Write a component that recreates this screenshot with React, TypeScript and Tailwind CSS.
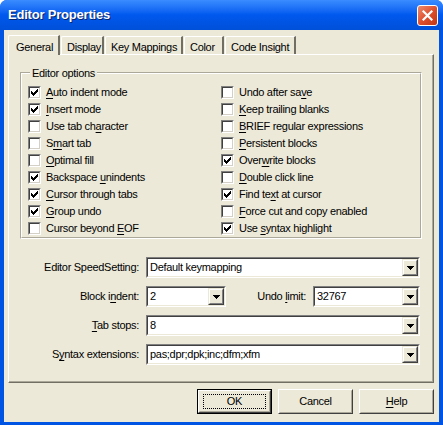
import React from "react";

const FONT = { fontFamily: '"Liberation Sans", Arial, sans-serif' };

type Opt = { text: string; u: number; checked: boolean };

const leftOpts: Opt[] = [
  { text: "Auto indent mode", u: 0, checked: true },
  { text: "Insert mode", u: 0, checked: true },
  { text: "Use tab character", u: 10, checked: false },
  { text: "Smart tab", u: 1, checked: false },
  { text: "Optimal fill", u: 0, checked: false },
  { text: "Backspace unindents", u: 10, checked: true },
  { text: "Cursor through tabs", u: 0, checked: true },
  { text: "Group undo", u: 0, checked: true },
  { text: "Cursor beyond EOF", u: 14, checked: false },
];

const rightOpts: Opt[] = [
  { text: "Undo after save", u: 13, checked: false },
  { text: "Keep trailing blanks", u: 0, checked: false },
  { text: "BRIEF regular expressions", u: 0, checked: false },
  { text: "Persistent blocks", u: 0, checked: false },
  { text: "Overwrite blocks", u: 4, checked: true },
  { text: "Double click line", u: 0, checked: false },
  { text: "Find text at cursor", u: 7, checked: true },
  { text: "Force cut and copy enabled", u: 0, checked: false },
  { text: "Use syntax highlight", u: 4, checked: true },
];

const Mnemonic = ({ text, u }: { text: string; u: number }) => (
  <span className="whitespace-pre">
    {text.slice(0, u)}
    <span className="underline underline-offset-2">{text[u]}</span>
    {text.slice(u + 1)}
  </span>
);

const CheckBox = ({ opt }: { opt: Opt }) => (
  <div className="flex items-center h-[17px]">
    <div className="w-[13px] h-[13px] border border-t-[#808080] border-l-[#808080] border-r-white border-b-white">
      <div className="w-full h-full bg-white border border-t-[#404040] border-l-[#404040] border-r-[#D4D0C8] border-b-[#D4D0C8] flex items-center justify-center">
        {opt.checked && (
          <svg width="7" height="7" viewBox="0 0 7 7" shapeRendering="crispEdges">
            <path d="M0 2h1v3H0zM1 3h1v3H1zM2 4h1v3H2zM3 3h1v3H3zM4 2h1v3H4zM5 1h1v3H5zM6 0h1v3H6z" fill="#000" />
          </svg>
        )}
      </div>
    </div>
    <span className="ml-[5px] text-[11px] tracking-[-0.3px] text-black leading-none">
      <Mnemonic text={opt.text} u={opt.u} />
    </span>
  </div>
);

const Arrow = () => (
  <svg width="7" height="4" viewBox="0 0 7 4" shapeRendering="crispEdges">
    <path d="M0 0h7v1H0zM1 1h5v1H1zM2 2h3v1H2zM3 3h1v1H3z" fill="#000" />
  </svg>
);

const Combo = ({ value, width }: { value: string; width: string }) => (
  <div className={`${width} h-[21px] border border-t-[#808080] border-l-[#808080] border-r-white border-b-white`}>
    <div className="h-full bg-white border border-t-[#404040] border-l-[#404040] border-r-[#ECE9D8] border-b-[#ECE9D8] flex items-stretch">
      <span className="flex-1 text-[11px] tracking-[-0.3px] leading-none pl-[2px] pt-[3px] text-black">{value}</span>
      <div className="w-[16px] border border-t-[#ECE9D8] border-l-[#ECE9D8] border-r-[#404040] border-b-[#404040]">
        <div className="h-full bg-[#ECE9D8] border border-t-white border-l-white border-r-[#808080] border-b-[#808080] flex items-center justify-center">
          <Arrow />
        </div>
      </div>
    </div>
  </div>
);

const Label = ({ text, u, width }: { text: string; u: number; width: string }) => (
  <span className={`${width} text-right text-[11px] tracking-[-0.3px] text-black pr-[7px]`}>
    {u < 0 ? text : <Mnemonic text={text} u={u} />}
  </span>
);

const Button = ({ children, def }: { children: React.ReactNode; def?: boolean }) => (
  <div className={`w-[75px] h-[25px] ${def ? "border border-black" : ""}`}>
    <div className="w-full h-full border border-t-white border-l-white border-r-[#404040] border-b-[#404040]">
      <div className="w-full h-full border border-t-[#ECE9D8] border-l-[#ECE9D8] border-r-[#ACA899] border-b-[#ACA899] flex items-center justify-center">
        <div className={`px-[3px] ${def ? "w-[63px] h-[15px] border border-dotted border-black" : ""} flex items-center justify-center text-[11px] tracking-[-0.3px] text-black`}>
          {children}
        </div>
      </div>
    </div>
  </div>
);

const tabs = [
  { t: "General", w: "w-[52px]" },
  { t: "Display", w: "w-[43px]" },
  { t: "Key Mappings", w: "w-[78px]" },
  { t: "Color", w: "w-[40px]" },
  { t: "Code Insight", w: "w-[71px]" },
];

export default function App() {
  return (
    <div className="w-[443px] h-[425px] bg-[#0054E3] flex flex-col rounded-t-[7px] overflow-hidden" style={FONT}>
      {/* title bar */}
      <div className="h-[30px] flex items-center justify-between pl-[8px] pr-[5px] bg-gradient-to-b from-[#3A8CFF] via-[#0058EE] to-[#0050D8]">
        <span className="text-white font-bold text-[13px] tracking-[-0.2px] [text-shadow:1px_1px_0_#0A246A]">
          Editor Properties
        </span>
        <div className="w-[21px] h-[21px] rounded-[3px] border border-white bg-gradient-to-br from-[#E98A6C] via-[#E0502D] to-[#C23512] flex items-center justify-center">
          <svg width="11" height="11" viewBox="0 0 11 11">
            <path d="M1.5 1.5 9.5 9.5M9.5 1.5 1.5 9.5" stroke="#fff" strokeWidth="2.2" strokeLinecap="square" />
          </svg>
        </div>
      </div>

      {/* client */}
      <div className="flex-1 mx-[4px] mb-[3px] bg-[#ECE9D8] flex flex-col pt-[4px] pl-[4px] pr-[5px]">
        {/* tabs */}
        <div className="flex items-end h-[20px]">
          {tabs.map(({ t, w }, i) =>
            i === 0 ? (
              <div
                key={t}
                className={`relative z-10 h-[20px] -mb-px ${w} border-t border-l border-white border-r-2 border-r-[#716F64] rounded-tl-[2px] bg-[#ECE9D8] text-[11px] tracking-[-0.3px] text-black pl-[7px] pt-[3px]`}
              >
                {t}
              </div>
            ) : (
              <div
                key={t}
                className={`h-[18px] ${w} border-t border-l border-white border-r-2 border-r-[#716F64] rounded-tl-[2px] text-[11px] tracking-[-0.3px] text-black pl-[5px] pt-[2px] ml-[1px]`}
              >
                {t}
              </div>
            )
          )}
        </div>

        {/* panel */}
        <div className="h-[329px] border-t border-l border-white border-r border-b border-r-[#716F64] border-b-[#716F64] shadow-[inset_-1px_-1px_0_#ACA899] pt-[13px] pl-[11px] pr-[11px]">
          {/* group box */}
          <div className="relative mt-[4px] h-[167px] border border-t-[#ACA899] border-l-[#ACA899] border-r-white border-b-white">
            <div className="h-full border border-t-white border-l-white border-r-[#ACA899] border-b-[#ACA899] grid grid-cols-[193px_1fr] pl-[6px] pt-[10px]">
              <div className="flex flex-col">
                {leftOpts.map((o) => (
                  <CheckBox key={o.text} opt={o} />
                ))}
              </div>
              <div className="flex flex-col">
                {rightOpts.map((o) => (
                  <CheckBox key={o.text} opt={o} />
                ))}
              </div>
            </div>
            <span className="absolute left-[9px] -top-[8px] px-[2px] bg-[#ECE9D8] text-[11px] tracking-[-0.3px] text-black">
              Editor options
            </span>
          </div>

          {/* combos */}
          <div className="flex flex-col gap-[8px] mt-[18px]">
            <div className="flex items-center">
              <Label text="Editor SpeedSetting:" u={-1} width="w-[126px]" />
              <Combo value="Default keymapping" width="w-[274px]" />
            </div>
            <div className="flex items-center">
              <Label text="Block indent:" u={7} width="w-[126px]" />
              <Combo value="2" width="w-[80px]" />
              <Label text="Undo limit:" u={5} width="w-[87px]" />
              <Combo value="32767" width="w-[107px]" />
            </div>
            <div className="flex items-center">
              <Label text="Tab stops:" u={0} width="w-[126px]" />
              <Combo value="8" width="w-[274px]" />
            </div>
            <div className="flex items-center">
              <Label text="Syntax extensions:" u={1} width="w-[126px]" />
              <Combo value="pas;dpr;dpk;inc;dfm;xfm" width="w-[274px]" />
            </div>
          </div>
        </div>

        {/* buttons */}
        <div className="flex justify-end gap-[6px] mt-[6px]">
          <Button def>OK</Button>
          <Button>Cancel</Button>
          <Button>
            <Mnemonic text="Help" u={0} />
          </Button>
        </div>
      </div>
    </div>
  );
}
